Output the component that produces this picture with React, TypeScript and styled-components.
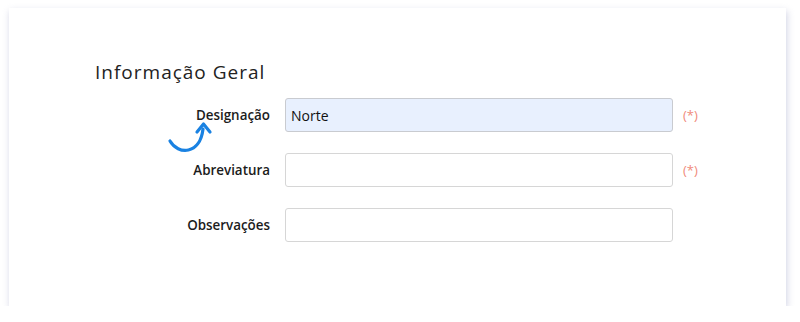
import styled, { createGlobalStyle } from 'styled-components';

const GlobalStyle = createGlobalStyle`
  html, body {
    margin: 0;
    padding: 0;
    background: #ffffff;
  }
  body {
    padding: 8px 14px 0 9px;
  }
`;

const Card = styled.section`
  box-sizing: border-box;
  height: 298px;
  padding: 52px 0 0 86px;
  background: #ffffff;
  box-shadow: 1px 3px 7px rgba(150, 155, 195, 0.45);
`;

const Title = styled.h2`
  margin: 0 0 14px;
  font-family: 'Open Sans', sans-serif;
  font-weight: 400;
  font-size: 19px;
  line-height: 24px;
  color: #222;
  letter-spacing: 1px;
`;

const Form = styled.form`
  display: grid;
  grid-template-columns: 175px 388px auto;
  column-gap: 15px;
  row-gap: 21px;
  align-items: center;
`;

const Label = styled.label`
  text-align: right;
  font-family: 'Open Sans', sans-serif;
  font-weight: 600;
  font-size: 13.4px;
  line-height: 18px;
  color: #1c1c1c;
`;

const LabelText = styled.span`
  position: relative;
  display: inline-block;
`;

const Input = styled.input<{ $filled?: boolean }>`
  box-sizing: border-box;
  width: 100%;
  height: 34px;
  padding: 0 5px;
  font-family: 'Open Sans', sans-serif;
  font-size: 14px;
  color: #111;
  background: ${p => (p.$filled ? '#e8f0fe' : '#ffffff')};
  border: 1px solid ${p => (p.$filled ? '#c9cbd0' : '#d6d6d6')};
  border-radius: 3px;
  outline: none;
`;

const Required = styled.span`
  margin-left: -5px;
  font-family: 'Open Sans', sans-serif;
  font-size: 13px;
  color: #f08a7a;
`;

const Arrow = styled.svg`
  position: absolute;
  left: -30px;
  top: 11px;
  overflow: visible;
`;

const CurvedArrow = () => (
  <Arrow width="50" height="40" viewBox="0 0 50 40">
    <path
      d="M4 24 C 12 38, 34 38, 37 12"
      fill="none"
      stroke="#1a82e2"
      strokeWidth="3.2"
      strokeLinecap="round"
    />
    <path
      d="M31 15 L37.5 7 L44 15"
      fill="none"
      stroke="#1a82e2"
      strokeWidth="3.2"
      strokeLinecap="round"
      strokeLinejoin="round"
    />
  </Arrow>
);

export default function App() {
  return (
    <>
      <GlobalStyle />
      <Card>
        <Title>Informação Geral</Title>
        <Form>
          <Label htmlFor="designacao">
            <LabelText>
              Designação
              <CurvedArrow />
            </LabelText>
          </Label>
          <Input id="designacao" $filled defaultValue="Norte" />
          <Required>(*)</Required>

          <Label htmlFor="abreviatura">
            <LabelText>Abreviatura</LabelText>
          </Label>
          <Input id="abreviatura" />
          <Required>(*)</Required>

          <Label htmlFor="observacoes">
            <LabelText>Observações</LabelText>
          </Label>
          <Input id="observacoes" />
          <span />
        </Form>
      </Card>
    </>
  );
}
